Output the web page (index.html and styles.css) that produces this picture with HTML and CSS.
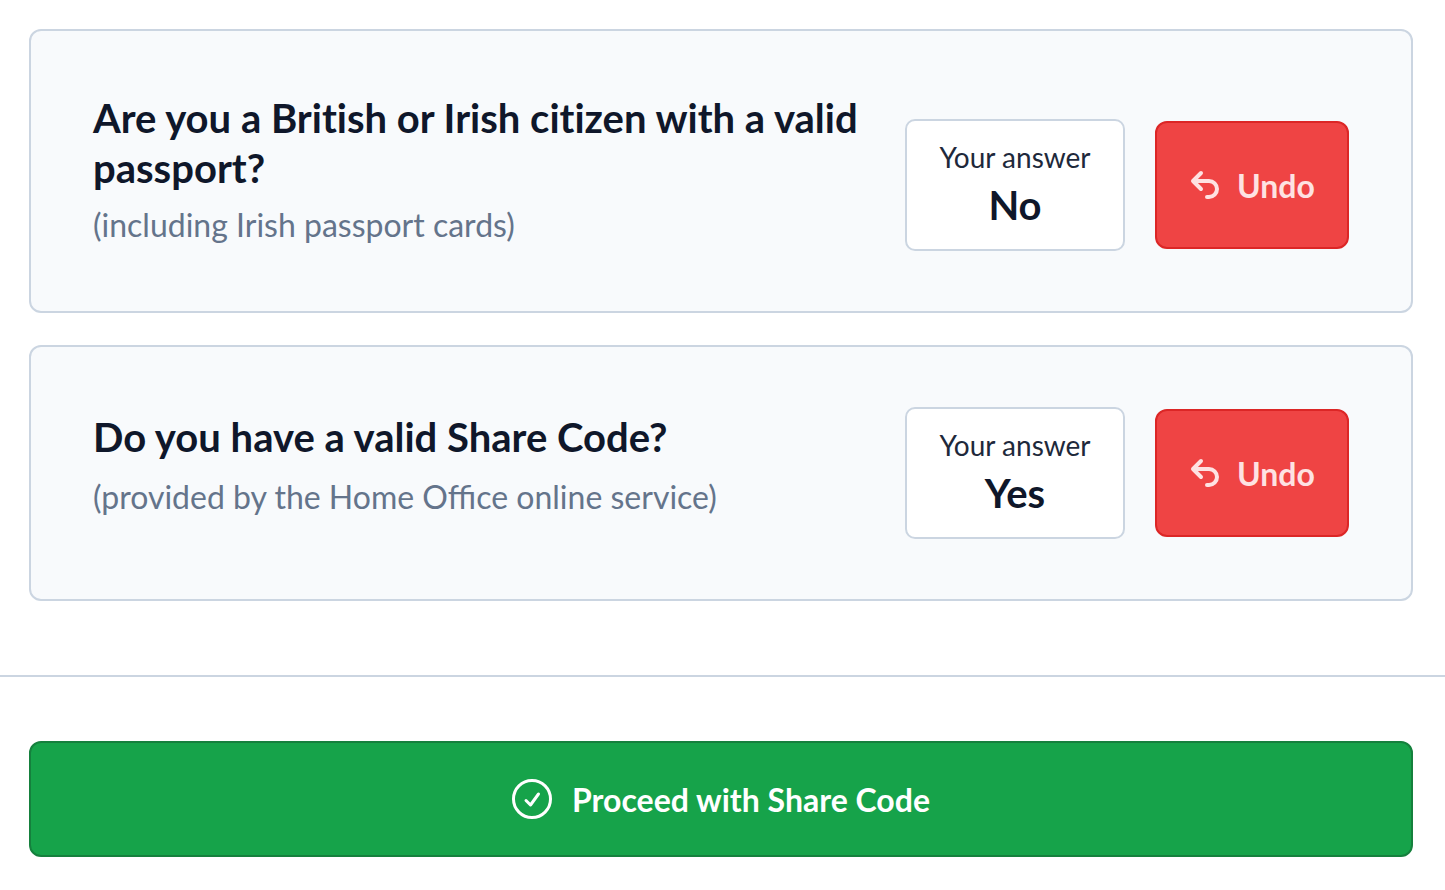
FILE: index.html
```html
<!DOCTYPE html>
<html lang="en">

<head>
  <meta charset="UTF-8">
  <meta name="viewport" content="width=device-width, initial-scale=1">
  <title>Right to Work Check</title>
  <link rel="stylesheet" href="styles.css">
</head>

<body>
  <main class="answers">
    <section class="card">
      <div class="question">
        <h2>Are you a British or Irish citizen with a valid passport?</h2>
        <p>(including Irish passport cards)</p>
      </div>
      <div class="answer">
        <span class="answer-label">Your answer</span>
        <strong class="answer-value">No</strong>
      </div>
      <button type="button" class="undo-button">
        <svg class="undo-icon" viewBox="0 0 32 32" aria-hidden="true">
          <path d="M12 4 L4 12 L12 20 M4 12 H20 A8 8 0 0 1 20 28 H18" />
        </svg>
        Undo
      </button>
    </section>

    <section class="card">
      <div class="question question-short">
        <h2>Do you have a valid Share Code?</h2>
        <p>(provided by the Home Office online service)</p>
      </div>
      <div class="answer">
        <span class="answer-label">Your answer</span>
        <strong class="answer-value">Yes</strong>
      </div>
      <button type="button" class="undo-button">
        <svg class="undo-icon" viewBox="0 0 32 32" aria-hidden="true">
          <path d="M12 4 L4 12 L12 20 M4 12 H20 A8 8 0 0 1 20 28 H18" />
        </svg>
        Undo
      </button>
    </section>
  </main>

  <footer class="actions">
    <button type="button" class="proceed-button">
      <svg class="check-icon" viewBox="0 0 40 40" aria-hidden="true">
        <circle cx="20" cy="20" r="18.5" />
        <path d="M14 21.5 L18.5 26 L26.5 15" />
      </svg>
      Proceed with Share Code
    </button>
  </footer>
</body>

</html>
```

FILE: styles.css
```css
:root {
  --border: #cbd5e1;
  --card: #f8fafc;
  --text: #0f172a;
  --label: #1e293b;
  --muted: #64748b;
  --red: #ef4444;
  --red-dark: #dc2626;
  --green: #16a34a;
  --green-dark: #15803d;
}

* {
  box-sizing: border-box;
}

body {
  margin: 0;
  background-color: #ffffff;
  color: var(--text);
  font-family: Lato, sans-serif;
}

.answers {
  display: flex;
  flex-direction: column;
  gap: 32px;
  padding: 29px 32px 74px 29px;
}

.card {
  display: flex;
  align-items: flex-end;
  padding: 60px 62px;
  background-color: var(--card);
  border: 2px solid var(--border);
  border-radius: 12px;
}

.question {
  display: flex;
  flex: 1;
  flex-direction: column;
  gap: 8px;
  align-self: flex-start;
  padding: 2px 0;
}

/* One-line questions sit a little looser */
.question-short {
  gap: 11px;
  padding-top: 5px;
}

.question h2 {
  margin: 0;
  font-size: 40px;
  line-height: 50px;
  font-weight: 700;
  font-variant-ligatures: no-common-ligatures;
}

.question p {
  margin: 0;
  color: var(--muted);
  font-size: 32px;
  line-height: 48px;
}

/* Answer box */
.answer {
  display: flex;
  flex-direction: column;
  align-items: center;
  width: 220px;
  margin: 0 30px;
  padding: 14px 0 18px;
  background-color: #ffffff;
  border: 2px solid var(--border);
  border-radius: 10px;
}

.answer-label {
  color: var(--label);
  font-size: 28px;
  line-height: 44px;
}

.answer-value {
  font-size: 40px;
  line-height: 52px;
}

.undo-button,
.proceed-button {
  display: flex;
  align-items: center;
  justify-content: center;
  border-radius: 12px;
  font-family: inherit;
  font-size: 32px;
  font-weight: 700;
  cursor: pointer;
}

.undo-button {
  gap: 16px;
  width: 194px;
  height: 128px;
  margin-bottom: 2px;
  background-color: var(--red);
  border: 2px solid var(--red-dark);
  color: #fee2e2;
}

.proceed-button {
  gap: 20px;
  width: 100%;
  height: 116px;
  background-color: var(--green);
  border: 2px solid var(--green-dark);
  color: #ffffff;
}

.undo-icon,
.check-icon {
  fill: none;
  stroke: currentColor;
  stroke-linecap: round;
  stroke-linejoin: round;
}

.undo-icon {
  width: 32px;
  height: 32px;
  stroke-width: 4;
}

.check-icon {
  width: 40px;
  height: 40px;
  stroke-width: 3;
}

.actions {
  padding: 64px 32px 33px 29px;
  border-top: 2px solid var(--border);
}
```
